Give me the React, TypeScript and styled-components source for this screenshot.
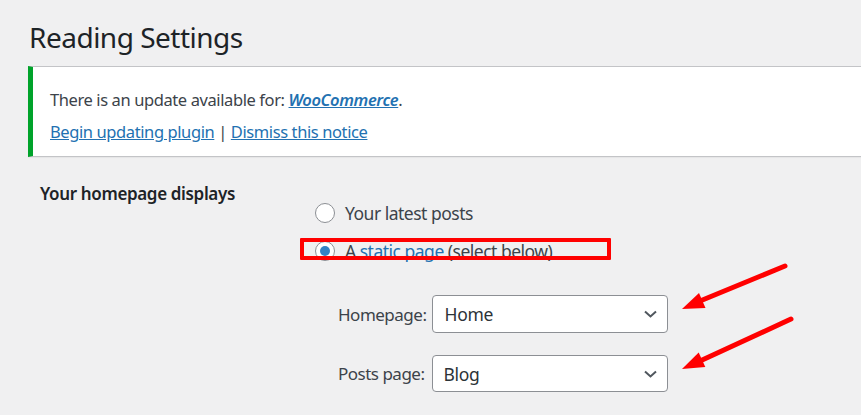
import React from 'react';
import styled, { createGlobalStyle } from 'styled-components';

const GlobalStyle = createGlobalStyle`
  html, body {
    margin: 0;
    padding: 0;
    background: #f0f0f1;
    font-family: "Noto Sans", "Open Sans", sans-serif;
    color: #3c434a;
  }
`;

const Page = styled.div`
  position: relative;
  width: 861px;
  height: 415px;
  overflow: hidden;
  padding-left: 28px;
  box-sizing: border-box;
`;

const Title = styled.h1`
  margin: 0;
  padding: 18px 0 0 1px;
  font-size: 28px;
  letter-spacing: -0.5px;
  font-weight: 400;
  line-height: 38px;
  color: #1d2327;
`;

const Notice = styled.div`
  margin-top: 10px;
  margin-right: -20px;
  background: #fff;
  border: 1px solid #c3c4c7;
  border-left: 5px solid #00a32a;
  box-shadow: 0 1px 1px rgba(0, 0, 0, 0.04);
  padding: 21px 0 12px 17px;
  display: flex;
  flex-direction: column;
  gap: 8px;
`;

const NoticeLine = styled.p`
  margin: 0;
  font-size: 16.5px;
  letter-spacing: -0.4px;
  line-height: 24px;
  color: #3c434a;
`;

const Link = styled.a<{ $italic?: boolean }>`
  color: #2271b1;
  text-decoration: underline;
  font-style: ${(p) => (p.$italic ? 'italic' : 'normal')};
  font-weight: ${(p) => (p.$italic ? 600 : 400)};
`;

const FormTable = styled.div`
  display: grid;
  grid-template-columns: 275px 1fr;
  margin-top: 25px;
  padding-left: 12px;
`;

const RowHeader = styled.div`
  font-size: 17px;
  letter-spacing: -0.35px;
  font-weight: 600;
  line-height: 24px;
  color: #1d2327;
`;

const Fieldset = styled.div`
  padding-top: 19px;
  display: flex;
  flex-direction: column;
`;

const RadioRow = styled.label`
  position: relative;
  display: flex;
  align-items: center;
  gap: 10px;
  height: 24px;
  margin-bottom: 14px;
  font-size: 17.5px;
  letter-spacing: -0.5px;
  color: #3c434a;
`;

const Radio = styled.span<{ $checked?: boolean }>`
  width: 20px;
  height: 20px;
  box-sizing: border-box;
  border-radius: 50%;
  border: 1px solid #8c8f94;
  background: #fff;
  display: flex;
  align-items: center;
  justify-content: center;
  &::after {
    content: '';
    display: ${(p) => (p.$checked ? 'block' : 'none')};
    width: 10px;
    height: 10px;
    border-radius: 50%;
    background: #3582c4;
  }
`;

const Highlight = styled.span`
  position: absolute;
  left: -15px;
  top: -1px;
  width: 311px;
  height: 22px;
  box-sizing: border-box;
  border: 4px solid #ff0000;
  border-radius: 1px;
`;

const InlineLink = styled.span`
  color: #2271b1;
`;

const SelectRow = styled.div<{ $shift: number }>`
  display: flex;
  align-items: center;
  padding-left: 23px;
  gap: ${(p) => p.$shift}px;
  margin-top: ${(p) => (p.$shift === 6 ? 18 : 22)}px;
  font-size: 17px;
  letter-spacing: -0.5px;
  color: #3c434a;
`;

const Select = styled.div<{ $height: number }>`
  width: 236px;
  height: ${(p) => p.$height}px;
  box-sizing: border-box;
  background: #fff;
  border: 1px solid #8c8f94;
  border-radius: 4px;
  display: flex;
  align-items: center;
  justify-content: space-between;
  padding: 0 10px 0 11px;
  font-size: 17.5px;
  letter-spacing: -0.3px;
  color: #2c3338;
`;

const Chevron = () => (
  <svg width="13" height="8" viewBox="0 0 13 8">
    <path d="M1 1.5l5.5 5 5.5-5" fill="none" stroke="#50575e" strokeWidth="2" />
  </svg>
);

const Arrows = styled.svg`
  position: absolute;
  left: 0;
  top: 0;
  pointer-events: none;
`;

export default function App() {
  return (
    <Page>
      <GlobalStyle />
      <Title>Reading Settings</Title>
      <Notice>
        <NoticeLine>
          There is an update available for: <Link $italic>WooCommerce</Link>.
        </NoticeLine>
        <NoticeLine>
          <Link>Begin updating plugin</Link> | <Link>Dismiss this notice</Link>
        </NoticeLine>
      </Notice>
      <FormTable>
        <RowHeader>Your homepage displays</RowHeader>
        <Fieldset>
          <RadioRow>
            <Radio />
            Your latest posts
          </RadioRow>
          <RadioRow>
            <Radio $checked />
            <span>
              A <InlineLink>static page</InlineLink> (select below)
            </span>
            <Highlight />
          </RadioRow>
          <SelectRow $shift={6}>
            Homepage:
            <Select $height={38}>
              Home
              <Chevron />
            </Select>
          </SelectRow>
          <SelectRow $shift={7}>
            Posts page:
            <Select $height={37}>
              Blog
              <Chevron />
            </Select>
          </SelectRow>
        </Fieldset>
      </FormTable>
      <Arrows width="861" height="415" viewBox="0 0 861 415">
        <line x1="785" y1="266" x2="700" y2="301" stroke="#ff0000" strokeWidth="5" strokeLinecap="round" />
        <polygon points="682,309 699,293 705.5,308" fill="#ff0000" />
        <line x1="791" y1="319" x2="700" y2="361" stroke="#ff0000" strokeWidth="5" strokeLinecap="round" />
        <polygon points="682,369 698.7,352.5 705.3,367" fill="#ff0000" />
      </Arrows>
    </Page>
  );
}
